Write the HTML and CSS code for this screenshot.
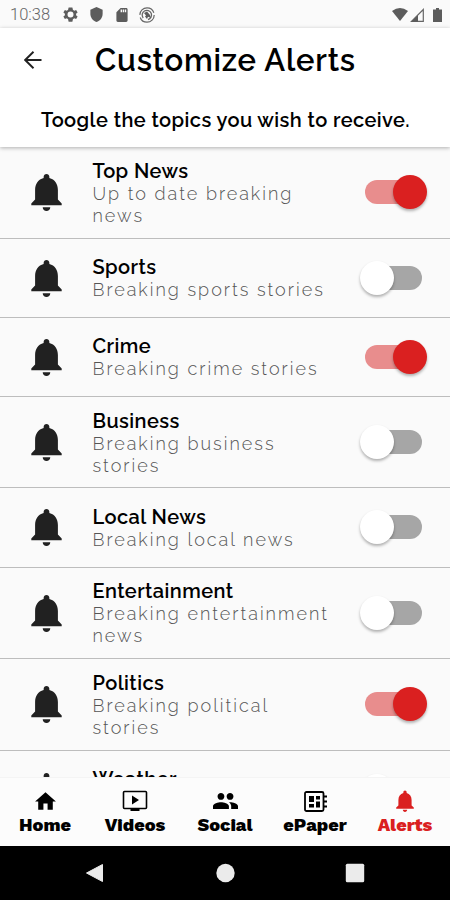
FILE: index.html
```
<!DOCTYPE html>
<html lang="en">
<head>
<meta charset="utf-8">
<title>Customize Alerts</title>
<link rel="stylesheet" href="styles.css">
</head>
<body>
<svg class="defs" aria-hidden="true">
  <symbol id="bell" viewBox="4 2 16 20"><path d="M12 22c1.100 0 2-.9 2-2h-4c0 1.100.9 2 2 2zm6-6v-5c0-3.070-1.630-5.640-4.500-6.320V4c0-.83-.67-1.500-1.500-1.500s-1.500.67-1.500 1.500v.68C7.640 5.360 6 7.920 6 11v5l-2 2v1h16v-1l-2-2z"/></symbol>
</svg>
<div class="screen">
  <div class="status">
    <span class="clock">10:38</span>
    <svg class="gear" viewBox="2 2 20 20"><path fill-rule="evenodd" d="M19.400 13a7.500 7.500 0 0 0 0-2l2.100-1.600-2-3.500-2.500 1a7.500 7.500 0 0 0-1.700-1L14.500 2.500h-5l-.8 3.400a7.500 7.500 0 0 0-1.700 1l-2.500-1-2 3.500L4.600 11a7.500 7.500 0 0 0 0 2l-2.100 1.600 2 3.500 2.500-1a7.500 7.500 0 0 0 1.700 1l.8 3.400h5l.8-3.400a7.500 7.500 0 0 0 1.700-1l2.500 1 2-3.500zM12 16a4 4 0 1 1 0-8 4 4 0 0 1 0 8z"/></svg>
    <svg class="shield" viewBox="3 1 18 22"><path d="M12 1 3 5v6c0 5.550 3.840 10.740 9 12 5.160-1.260 9-6.450 9-12V5z"/></svg>
    <svg class="sd" viewBox="4 2 16 20"><path d="M18 2h-8L4 8v12c0 1.100.9 2 2 2h12c1.100 0 2-.9 2-2V4c0-1.100-.9-2-2-2zm-6 6h-2V4h2v4zm3 0h-2V4h2v4zm3 0h-2V4h2v4z"/></svg>
    <svg class="sync" viewBox="0 0 16 16"><circle cx="8" cy="8" r="7.200" fill="none" stroke="#666" stroke-width="1.200" stroke-dasharray="20 2.600"/><path d="M4.200 11A4.700 4.700 0 1 1 9 12.600" fill="none" stroke="#666" stroke-width="1.300"/><path d="M5 6l3-1.500L11 8l1 3-3-1.200L8 12 6 9.500l1-.9z"/></svg>
    <span class="grow"></span>
    <svg class="wifi" viewBox="0 0 16 13"><path d="M0 3Q8-3 16 3L8 13z"/></svg>
    <svg class="signal" viewBox="0 0 14 14"><path d="M1.500 13.300H13.300V1.500z" fill="none" stroke="#666" stroke-width="1.200"/><path d="M1 14 8 7v7z"/></svg>
    <svg class="battery" viewBox="0 0 9 14"><path d="M3 0h3v1.500h3V14H0V1.500h3z"/></svg>
  </div>
  <header class="header">
    <div class="titlebar">
      <svg class="back" viewBox="0 0 18 18"><path d="M17.500 9H1.500M9.500 .8 1.200 9l8.300 8.200" fill="none" stroke="#222" stroke-width="1.900"/></svg>
      <h1>Customize Alerts</h1>
    </div>
    <p class="intro">Toogle the topics you wish to receive.</p>
  </header>
  <main class="list">
    <div class="row tall"><svg class="bell"><use href="#bell"/></svg><div class="copy"><h2>Top News</h2><p>Up to date breaking<br>news</p></div><span class="switch on"></span></div>
    <div class="row"><svg class="bell"><use href="#bell"/></svg><div class="copy"><h2>Sports</h2><p>Breaking sports stories</p></div><span class="switch"></span></div>
    <div class="row"><svg class="bell"><use href="#bell"/></svg><div class="copy"><h2>Crime</h2><p>Breaking crime stories</p></div><span class="switch on"></span></div>
    <div class="row tall"><svg class="bell"><use href="#bell"/></svg><div class="copy"><h2>Business</h2><p>Breaking business<br>stories</p></div><span class="switch"></span></div>
    <div class="row"><svg class="bell"><use href="#bell"/></svg><div class="copy"><h2>Local News</h2><p>Breaking local news</p></div><span class="switch"></span></div>
    <div class="row tall"><svg class="bell"><use href="#bell"/></svg><div class="copy"><h2>Entertainment</h2><p>Breaking entertainment<br>news</p></div><span class="switch"></span></div>
    <div class="row tall"><svg class="bell"><use href="#bell"/></svg><div class="copy"><h2>Politics</h2><p>Breaking political<br>stories</p></div><span class="switch on"></span></div>
    <div class="row last"><svg class="bell"><use href="#bell"/></svg><div class="copy"><h2>Weather</h2></div><span class="switch"></span></div>
  </main>
  <nav class="tabs">
    <a class="tab"><svg viewBox="0 0 24 24"><path d="M10 20v-6h4v6h5v-8h3L12 3 2 12h3v8z"/></svg><span>Home</span></a>
    <a class="tab"><svg class="wide" viewBox="0 0 26 22"><path d="M2.500 1.500h21q1 0 1 1v15q0 1-1 1h-21q-1 0-1-1v-15q0-1 1-1z" fill="none" stroke="currentColor" stroke-width="1.600"/><path d="M10 5.500v9l7-4.500zM8.500 18h9v3h-9z"/></svg><span>Videos</span></a>
    <a class="tab"><svg class="people" viewBox="1 5 22 14"><path d="M16 11c1.660 0 3-1.340 3-3s-1.340-3-3-3-3 1.340-3 3 1.340 3 3 3zm-8 0c1.660 0 3-1.340 3-3S9.660 5 8 5 5 6.340 5 8s1.340 3 3 3zm0 2c-2.330 0-7 1.170-7 3.500V19h14v-2.500C15 14.170 10.330 13 8 13zm8 0c-.29 0-.62.020-.97.050 1.160.84 1.970 1.970 1.970 3.450V19h6v-2.500c0-2.330-4.670-3.500-7-3.500z"/></svg><span>Social</span></a>
    <a class="tab"><svg class="paper" viewBox="0 0 23 21"><rect x="1" y="1" width="18.500" height="19" rx="1.500" fill="none" stroke="currentColor" stroke-width="1.800"/><path d="M5 5h5v6H5zM12 5h4v3.500h-4zM5 13h5v3.500H5zM12 10.500h4v6h-4zM20 4.500h3v2h-3zM20 9.500h3v2h-3zM20 14.500h3v2h-3z"/></svg><span>ePaper</span></a>
    <a class="tab active"><svg class="small-bell"><use href="#bell"/></svg><span>Alerts</span></a>
  </nav>
  <div class="system">
    <svg viewBox="0 0 20 20"><path d="M17.500 1.500v17L1.500 10z" fill="#ebebeb" stroke="#ebebeb" stroke-linejoin="round"/></svg>
    <svg viewBox="0 0 20 20"><circle cx="10.500" cy="10" r="9.200"/></svg>
    <svg viewBox="0 0 20 20"><rect x=".8" y=".8" width="18.400" height="18.400" rx="1.500"/></svg>
  </div>
</div>
</body>
</html>
```
FILE: styles.css
```
* { box-sizing: border-box; }
body { margin: 0; background: #fafafa; color: #000; font-family: Raleway, Lato, sans-serif; }
h1, h2, p { margin: 0; white-space: nowrap; }
.defs { position: absolute; width: 0; height: 0; }
.screen { display: flex; flex-direction: column; width: 450px; height: 900px; overflow: hidden; }
.status { display: flex; align-items: center; height: 28px; padding: 1px 8px 0 10px; background: #fafafa; flex: none; }
.status svg { fill: #5c5c5c; flex: none; }
.clock { width: 53px; font: 300 16.500px Roboto, sans-serif; color: #666; }
.gear { width: 15px; height: 15px; }
.shield { width: 13px; height: 15px; margin-left: 12px; }
.sd { width: 12px; height: 14px; margin-left: 13px; }
.sync { width: 16px; height: 16px; margin-left: 11px; }
.grow { flex: 1; }
.wifi { width: 16px; height: 13px; }
.signal { width: 14px; height: 14px; margin-left: 2px; }
.battery { width: 9px; height: 14px; margin-left: 9px; }
.header { height: 119px; background: #fff; flex: none; box-shadow: 0 1px 4px rgba(0,0,0,.3); z-index: 1; }
.titlebar { display: flex; align-items: center; height: 64px; padding-left: 24px; }
.back { width: 18px; height: 18px; flex: none; }
h1 { margin-left: 53px; font-size: 31px; line-height: 36px; font-weight: 600; letter-spacing: .78px; }
.intro { padding-left: 41px; line-height: 24px; margin-top: 16px; font-size: 20px; font-weight: 600; letter-spacing: .42px; }
.list { flex: 1; min-height: 0; overflow: hidden; }
.row { display: flex; align-items: center; height: 79.200px; padding: 0 24px 0 31px; border-bottom: 1.500px solid #bdbdbd; }
.row.tall { height: 91.500px; }
.row.last { align-items: flex-start; padding-top: 21px; }
.row.last .copy { padding-top: 0; margin-top: -4px; }
.bell { width: 31px; height: 38px; fill: #212121; flex: none; }
.copy { flex: 1; margin-left: 30.500px; padding-top: 2px; }
h2 { font-size: 20px; line-height: 23px; font-weight: 600; letter-spacing: .43px; }
.copy p { font-size: 18px; line-height: 22px; font-weight: 300; color: #555; letter-spacing: 2px; }
.switch { display: flex; align-items: center; width: 66px; height: 34px; flex: none; padding: 0 5px; }
.switch::before { content: ""; width: 57px; height: 24px; border-radius: 12px; background: #a6a6a6; flex: none; }
.switch::after { content: ""; width: 34px; height: 34px; border-radius: 50%; background: #fff; box-shadow: 0 2px 3px rgba(0,0,0,.3); margin-left: -62px; flex: none; }
.switch.on::before { background: #e88d8d; }
.switch.on::after { background: #da2020; margin-left: -29px; }
.tabs { display: flex; height: 69px; flex: none; background: #fcfcfc; border-top: 1px solid #f4f4f4; z-index: 1; }
.tab { flex: 1; display: flex; flex-direction: column; align-items: center; padding-top: 10.500px; }
.tab svg { width: 25px; height: 25px; fill: currentColor; flex: none; margin-bottom: -1px; }
.tab .wide { width: 26px; height: 22px; margin: 1px 0; }
.tab .people { width: 25px; height: 16px; margin: 4px 0; }
.tab .paper { width: 23px; height: 21px; margin: 2px 0 1px; }
.tab .small-bell { width: 18px; height: 22px; margin: 1px 0; }
.tab span { font: 800 18.200px/24px "Work Sans", Inter, sans-serif; letter-spacing: 0; }
.active { color: #da2020; }
.system { display: flex; height: 54px; flex: none; align-items: center; justify-content: space-between; padding: 0 85px; background: #000; }
.system svg { width: 20px; height: 20px; fill: #ebebeb; }
.row.last .switch { margin-top: 2px; }
```
